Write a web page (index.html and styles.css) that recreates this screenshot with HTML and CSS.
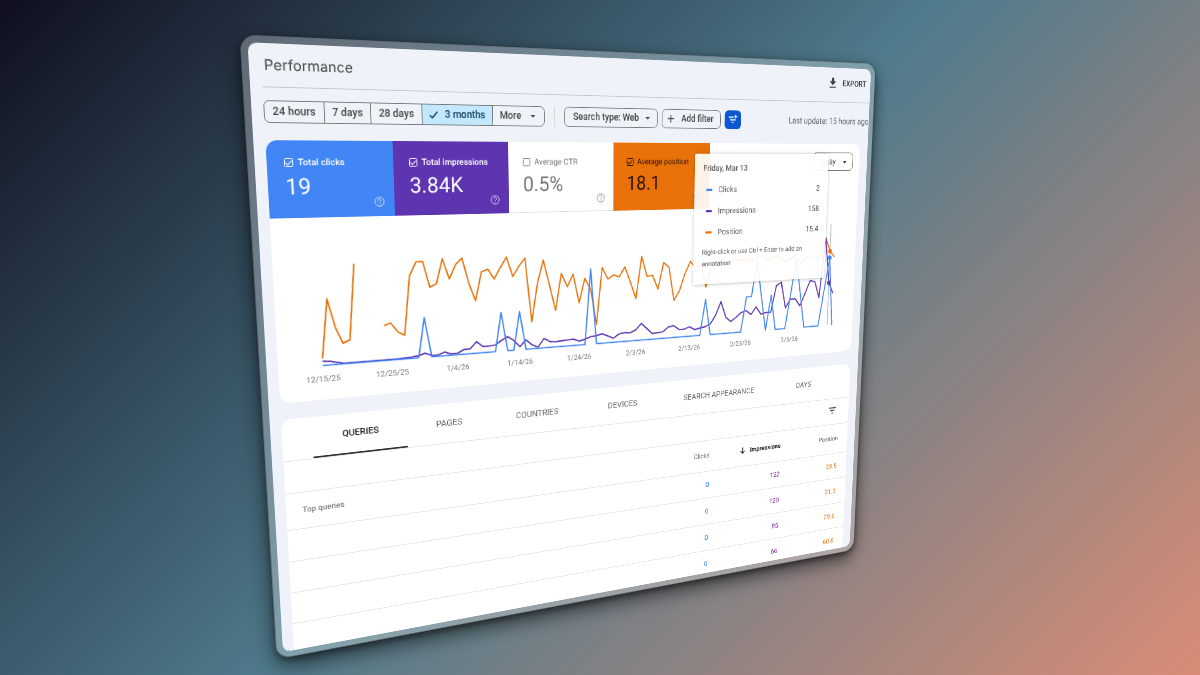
FILE: index.html
```html
<!DOCTYPE html>
<html lang="en">
<head>
<meta charset="utf-8">
<title>Performance</title>
<link rel="stylesheet" href="styles.css">
</head>
<body>
<main class="scene">
  <div class="window">
    <header class="titlebar">
      <h1 class="title">Performance</h1>
      <button class="export" type="button">
        <svg width="18" height="20" viewBox="0 0 18 20" fill="currentColor"><path d="M6.5 1h5v6H16l-7 7-7-7h4.500z"/><path d="M2 16.500h14v2H2z"/></svg>
        EXPORT
      </button>
    </header>

    <div class="filters">
      <div class="ranges">
        <button class="range" type="button">24 hours</button>
        <button class="range" type="button">7 days</button>
        <button class="range" type="button">28 days</button>
        <button class="range selected" type="button">
          <svg width="14" height="12" viewBox="0 0 14 12" fill="none" stroke="currentColor" stroke-width="2"><path d="M1 6.500l4 4L13 1.500"/></svg>
          3 months
        </button>
        <button class="range" type="button">More
          <svg class="caret" width="8" height="4" viewBox="0 0 8 4"><path d="M0 0h8L4 4z" fill="currentColor"/></svg>
        </button>
      </div>
      <span class="rule"></span>
      <button class="chip" type="button">Search type: Web
        <svg class="caret" width="8" height="4" viewBox="0 0 8 4"><path d="M0 0h8L4 4z" fill="currentColor"/></svg>
      </button>
      <button class="chip chip-add" type="button">
        <svg width="14" height="14" viewBox="0 0 14 14" stroke="currentColor" stroke-width="1.800"><path d="M7 1v12M1 7h12"/></svg>
        Add filter
      </button>
      <button class="smart" type="button" aria-label="Smart filter">
        <svg width="20" height="18" viewBox="0 0 20 18" fill="none" stroke="#fff" stroke-width="2"><path d="M2 5h9M4.500 9.500h11M7.500 14h4"/><path d="M15.500 0l1.200 2.800 2.800 1.200-2.800 1.200-1.200 2.800-1.200-2.800L11.500 4l2.800-1.200z" fill="#fff" stroke="none"/></svg>
      </button>
      <span class="updated">Last update: 15 hours ago</span>
    </div>

    <section class="card report">
      <div class="metrics">
        <div class="metric clicks">
          <label class="metric-label"><input class="tick" type="checkbox" checked>Total clicks</label>
          <strong class="metric-value">19</strong>
          <svg class="help" viewBox="0 0 16 16"><circle cx="8" cy="8" r="7"/><path d="M5.800 6.400a2.200 2.200 0 1 1 3.300 1.900C8.300 8.800 8 9.200 8 10M8 11.300v1.400"/></svg>
        </div>
        <div class="metric impressions">
          <label class="metric-label"><input class="tick" type="checkbox" checked>Total impressions</label>
          <strong class="metric-value">3.84K</strong>
          <svg class="help" viewBox="0 0 16 16"><circle cx="8" cy="8" r="7"/><path d="M5.800 6.400a2.200 2.200 0 1 1 3.300 1.900C8.300 8.800 8 9.200 8 10M8 11.300v1.400"/></svg>
        </div>
        <div class="metric">
          <label class="metric-label"><input class="tick" type="checkbox">Average CTR</label>
          <strong class="metric-value">0.5%</strong>
          <svg class="help" viewBox="0 0 16 16"><circle cx="8" cy="8" r="7"/><path d="M5.800 6.400a2.200 2.200 0 1 1 3.300 1.900C8.300 8.800 8 9.200 8 10M8 11.300v1.400"/></svg>
        </div>
        <div class="metric position">
          <label class="metric-label"><input class="tick" type="checkbox" checked>Average position</label>
          <strong class="metric-value">18.1</strong>
          <svg class="help" viewBox="0 0 16 16"><circle cx="8" cy="8" r="7"/><path d="M5.800 6.400a2.200 2.200 0 1 1 3.300 1.900C8.300 8.800 8 9.200 8 10M8 11.300v1.400"/></svg>
        </div>
        <div class="interval">
          <select class="interval-select" aria-label="Interval"><option>Daily</option></select>
          <svg class="interval-caret" width="8" height="5" viewBox="0 0 8 5"><path d="M0 0h8L4 5z" fill="currentColor"/></svg>
        </div>
      </div>
      <svg class="chart" id="chart" viewBox="0 0 1032 272"></svg>
      <div class="tooltip">
        <div class="tip-title">Friday, Mar 13</div>
        <div class="tip-row"><i class="dash dash-clicks"></i>Clicks<span class="tip-value">2</span></div>
        <div class="tip-row"><i class="dash dash-impressions"></i>Impressions<span class="tip-value">158</span></div>
        <div class="tip-row"><i class="dash dash-position"></i>Position<span class="tip-value">15.4</span></div>
        <p class="tip-note">Right-click or use Ctrl + Enter to add an annotation</p>
      </div>
    </section>

    <section class="card details">
      <nav class="tabs">
        <button class="tab active" type="button">QUERIES</button>
        <button class="tab" type="button">PAGES</button>
        <button class="tab" type="button">COUNTRIES</button>
        <button class="tab" type="button">DEVICES</button>
        <button class="tab" type="button">SEARCH APPEARANCE</button>
        <button class="tab" type="button">DAYS</button>
      </nav>
      <div class="toolbar">
        <button class="filter-rows" type="button" aria-label="Filter rows">
          <svg width="18" height="14" viewBox="0 0 18 14" stroke="currentColor" stroke-width="2"><path d="M1 2h16M4 7h10M7.500 12h3"/></svg>
        </button>
      </div>
      <table class="rows">
        <thead>
          <tr>
            <th class="query">Top queries</th>
            <th class="num">Clicks</th>
            <th class="num sorted"><svg width="12" height="12" viewBox="0 0 12 12" fill="none" stroke="currentColor" stroke-width="1.500"><path d="M6 0v11M1.500 6.500L6 11l4.500-4.500"/></svg>Impressions</th>
            <th class="num last">Position</th>
          </tr>
        </thead>
        <tbody>
          <tr><td></td><td class="num c">0</td><td class="num i">122</td><td class="num last p">29.5</td></tr>
          <tr><td></td><td class="num c">0</td><td class="num i">120</td><td class="num last p">31.3</td></tr>
          <tr><td></td><td class="num c">0</td><td class="num i">85</td><td class="num last p">29.6</td></tr>
          <tr><td></td><td class="num c">0</td><td class="num i">66</td><td class="num last p">60.6</td></tr>
        </tbody>
      </table>
    </section>
  </div>
</main>
<script src="chart.js"></script>
</body>
</html>
```

FILE: styles.css
```css
* { box-sizing: border-box; }

body {
  margin: 0;
  font-family: Roboto, "Liberation Sans", sans-serif;
  color: #3c4043;
  text-rendering: geometricPrecision;
}

button, select {
  font: inherit;
  color: inherit;
  background: none;
  border: 0;
  padding: 0;
  margin: 0;
}

svg { flex: none; }

.scene {
  height: 100vh;
  display: grid;
  grid-template: 100% / 100%;
  place-items: center;
  overflow: hidden;
  perspective: 1017px;
  background: linear-gradient(135deg, #0f0f1e 0%, #4f7b8c 50%, #d98c76 100%);
}

/* The dashboard floats as a tilted sheet of glass */
.window {
  zoom: .8;
  width: 1086px;
  height: 924px;
  overflow: hidden;
  background: #eff3f9;
  background-clip: padding-box;
  border: 10px solid rgba(255, 255, 255, .28);
  border-radius: 22px;
  box-shadow: 0 14px 36px rgba(0, 0, 0, .55), 0 4px 12px rgba(0, 0, 0, .4);
  transform: rotateX(-10deg) rotateY(24deg) scale(.75);
}

.titlebar {
  height: 60px;
  margin-left: 16px;
  padding: 0 9px 6px 4px;
  display: flex;
  align-items: center;
  justify-content: space-between;
  border-bottom: 1px solid #c4c7c5;
}

.title {
  margin: 6px 0 0;
  font: 400 20px/28px Inter, Roboto, sans-serif;
  color: #444746;
}

.export {
  display: flex;
  align-items: center;
  gap: 12px;
  font-size: 14px;
  font-weight: 500;
}

.filters {
  display: flex;
  align-items: center;
  gap: 8px;
  padding: 17px 0 0 16px;
  font-size: 15px;
  font-weight: 500;
  color: #444746;
}

.ranges {
  display: flex;
  height: 32px;
  border: 1px solid #747775;
  border-radius: 8px;
  overflow: hidden;
}

.range {
  display: flex;
  align-items: center;
  gap: 10px;
  padding: 0 11px;
  border-right: 1px solid #747775;
}

.range:last-child { border-right: 0; gap: 16px; padding-right: 14px; }

.range.selected { background: #c2e7ff; color: #0b3a5b; }

.rule {
  width: 1px;
  height: 32px;
  margin: 0 8px;
  background: #c4c7c5;
}

.chip {
  display: flex;
  align-items: center;
  gap: 12px;
  height: 32px;
  padding: 0 13px 0 14px;
  border: 1px solid #747775;
  border-radius: 8px;
}

.chip-add { padding: 0 13px 0 9px; }

.smart {
  width: 32px;
  height: 32px;
  display: grid;
  place-items: center;
  border-radius: 8px;
  background: #0b57d0;
}

.updated {
  margin-left: auto;
  font-weight: 400;
  color: #5f6368;
  white-space: nowrap;
}

.card {
  margin: 24px 17px 0 16px;
  background: #fff;
  border-radius: 16px;
  overflow: hidden;
}

.report { position: relative; }

.metrics { display: flex; }

.metric {
  position: relative;
  width: 180px;
  height: 109px;
  padding: 22px 24px;
  border-bottom: 1px solid #e0e0e0;
  color: #757575;
}

.metric-label {
  display: flex;
  align-items: center;
  gap: 6px;
  font-size: 13px;
  line-height: 18px;
  white-space: nowrap;
}

.metric-value {
  display: block;
  margin-top: 6px;
  font-size: 32px;
  line-height: 40px;
  font-weight: 400;
}

.clicks, .impressions, .position { border-color: transparent; }
.clicks { background: #4285f4; color: #fff; }
.impressions { background: #5e35b1; color: #fff; }
.position { background: #e8710a; color: #2b1303; }
.clicks .metric-label, .impressions .metric-label { font-weight: 500; }

.tick {
  appearance: none;
  display: grid;
  place-items: center;
  flex: none;
  width: 13px;
  height: 13px;
  margin: 0;
  border: 1px solid currentColor;
  border-radius: 2px;
  color: inherit;
}

.tick:checked::after {
  content: "";
  width: 4px;
  height: 7px;
  margin-top: -2px;
  border: solid currentColor;
  border-width: 0 2px 2px 0;
  rotate: 45deg;
}

.help {
  position: absolute;
  right: 15px;
  bottom: 12px;
  width: 15px;
  height: 15px;
  fill: none;
  stroke: currentColor;
  stroke-width: 1.3;
  opacity: .8;
}

.interval {
  position: relative;
  margin: 15px 14px 0 auto;
  height: 32px;
}

.interval-select {
  appearance: none;
  height: 32px;
  width: 88px;
  padding-left: 18px;
  border: 1px solid #747775;
  border-radius: 8px;
  font-size: 14px;
}

.interval-caret { position: absolute; right: 14px; top: 14px; }

.chart { display: block; width: 100%; height: auto; }

.line { fill: none; stroke-width: 2.3; stroke-linejoin: round; }
.line-clicks { stroke: #4285f4; }
.line-impressions { stroke: #5e35b1; }
.line-position { stroke: #e8710a; }
.dot-clicks { fill: #4285f4; }
.dot-impressions { fill: #5e35b1; }
.dot-position { fill: #e8710a; }
.cursor { stroke: #bdbdbd; stroke-width: 2; }
.day { font-size: 12px; fill: #757575; text-anchor: middle; }

.tooltip {
  position: absolute;
  left: 691px;
  top: 17px;
  width: 274px;
  padding: 15px 17px 23px;
  background: rgba(255, 255, 255, .91);
  border-radius: 3px;
  box-shadow: 0 1px 5px rgba(0, 0, 0, .25);
  font-size: 14px;
  color: #616161;
}

.tip-title { line-height: 20px; margin-bottom: 8px; font-weight: 500; }

.tip-row { display: flex; align-items: center; height: 36px; }

.dash { width: 12px; height: 4px; margin: 0 12px 0 6px; border-radius: 2px; }
.dash-clicks { background: #4285f4; }
.dash-impressions { background: #5e35b1; }
.dash-position { background: #e8710a; }

.tip-value { margin-left: auto; color: #424242; }

.tip-note { margin: 8px 0 0; font-size: 12px; line-height: 20px; }

.tabs {
  display: flex;
  gap: 2px;
  height: 65px;
  padding-left: 44px;
  border-bottom: 1px solid #e4e4e4;
}

.tab {
  padding: 2px 44px 0;
  font-size: 14px;
  color: #5f6368;
  white-space: nowrap;
}

.tab.active {
  font-weight: 500;
  color: #202124;
  border-bottom: 3px solid #303134;
}

.toolbar {
  display: flex;
  align-items: center;
  justify-content: flex-end;
  height: 51px;
  padding: 0 28px 4px 0;
  border-bottom: 1px solid #e4e4e4;
}

.filter-rows { display: flex; }

.rows {
  width: 100%;
  border-collapse: collapse;
  font-size: 12px;
  color: #616161;
}

.rows th { height: 56px; font-weight: 400; text-align: left; }
.rows td { height: 50px; font-size: 13px; }
.rows th, .rows td { padding: 0; border-bottom: 1px solid #e4e4e4; }
.rows .query { padding-left: 24px; }
.rows .num { width: 151px; text-align: right; }
.rows .last { padding-right: 22px; }
.rows .sorted { font-weight: 700; color: #202124; }
.sorted svg { margin-right: 10px; vertical-align: -2px; }
.rows .c { color: #1a73e8; }
.rows .i { color: #7b1fa2; }
.rows .p { color: #e8710a; }
```

FILE: chart.js
```javascript
const BASE = 219, LEFT = 64, STEP = 10.35;
const svg = document.getElementById("chart");

const clickDays = {15: 1, 27: 1, 30: 1, 42: 2, 63: 1, 71: 1, 72: 1, 73: 2, 74: 1, 76: 1, 80: 1, 81: 2, 82: 1, 87: 1, 88: 2};
const clicks = Array.from({length: 90}, (_, d) => (clickDays[d] || 0) * 62.5);

const impressions = [
  6.5, 5.5, 3, 1, 1, 1, 1, 1, 1, 1, 1, 1, 1.5, 2, 3.5, 6.5, 2, 2, 6, 2,
  2.5, 7.5, 8, 18.5, 10, 10, 11, 17.5, 23, 16, 5, 15.5, 6.5, 2, 15.5, 9.5, 8.5, 9.5, 10, 10.5,
  6.5, 9, 12.5, 13.5, 16, 11.5, 7, 13.5, 15, 14, 18, 28.5, 19.5, 10, 10.5, 11.5, 19, 20.5, 13.5, 13,
  16.5, 11, 13, 14.5, 19, 34, 57, 28.5, 20.5, 27, 35, 38, 30.5, 43.5, 29.5, 32, 32, 79, 85, 38,
  53.5, 53, 40, 61.5, 85, 82.5, 52.5, 162, 79, 59
];

const position = [
  10.5, 99.5, 56, 31.5, 36, 149.5, null, null, null, 54, 57, 43, 37, 127.5, 148.5, 149, 109, 113.5, 151.5, 120,
  142, 151.5, 111.5, 84, 129, 132.5, 116.5, 134, 150, 119, 135, 147.5, 44, 106, 143, 102, 60.5, 120, 98, 118,
  70.5, 110, 92, 32.5, 126.5, 107, 113.5, 109.5, 126, 100, 71.5, 142, 108, 109.5, 85.5, 130, 122, 64.5, 80.5, 109.5,
  130, 118, 124, 84, 118, 130, 126, 122, 128, 130, 127, 132, 124, 133, 135, 126, 129, 133, 124, 122,
  130, 125, 119, 127, 131, 122, 130, 162, 137, 126
];

function add(tag, cls, attrs, text) {
  const el = document.createElementNS("http://www.w3.org/2000/svg", tag);
  el.setAttribute("class", cls);
  for (const key in attrs) el.setAttribute(key, attrs[key]);
  if (text) el.textContent = text;
  svg.appendChild(el);
}

function line(values, cls) {
  let d = "", pen = "M";
  values.forEach((v, i) => {
    if (v === null) { pen = "M"; return; }
    d += pen + (LEFT + i * STEP).toFixed(1) + " " + (BASE - v);
    pen = "L";
  });
  add("path", "line " + cls, {d});
}

const hover = LEFT + 88 * STEP;
add("line", "cursor", {x1: hover, x2: hover, y1: BASE - 187, y2: BASE});
line(position, "line-position");
line(impressions, "line-impressions");
line(clicks, "line-clicks");
add("circle", "dot-position", {cx: hover, cy: BASE - position[88], r: 4});
add("circle", "dot-impressions", {cx: hover, cy: BASE - impressions[88], r: 4});
add("circle", "dot-clicks", {cx: hover, cy: BASE - clicks[88], r: 4});

["12/15/25", "12/25/25", "1/4/26", "1/14/26", "1/24/26", "2/3/26", "2/13/26", "2/23/26", "3/5/26"]
  .forEach((label, i) => add("text", "day", {x: LEFT + i * 10 * STEP, y: BASE + 25}, label));
```
